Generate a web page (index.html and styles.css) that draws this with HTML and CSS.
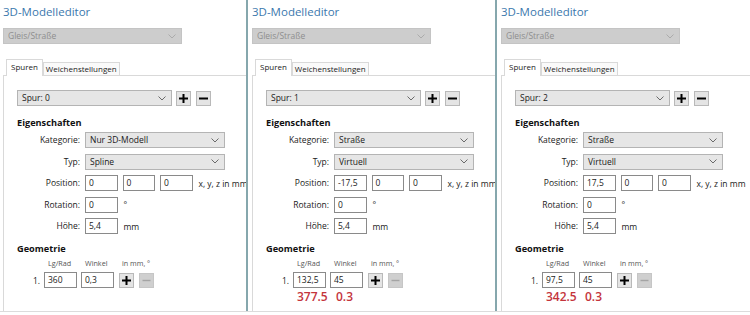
FILE: index.html
```html
<!DOCTYPE html>
<html>
<head>
	<title>3D-Modelleditor</title>
	<meta charset="utf-8">
	<link rel="stylesheet" href="styles.css">
</head>
<body>
	<div class="editors">

		<!-- Spur 0 -->
		<section class="editor">
			<h1 class="title">3D-Modelleditor</h1>
			<div class="combo disabled wide"><span>Gleis/Straße</span><svg class="chev" width="8" height="5"><polyline points="0.5,0.5 4,4 7.5,0.5"/></svg></div>
			<div class="tabs">
				<div class="tab active">Spuren</div>
				<div class="tab">Weichenstellungen</div>
			</div>
			<div class="pane">
				<div class="spur-row">
					<div class="combo spur"><span>Spur: 0</span><svg class="chev" width="8" height="5"><polyline points="0.5,0.5 4,4 7.5,0.5"/></svg></div>
					<div class="btn"><svg width="9" height="9"><path d="M4.5 0v9M0 4.5h9"/></svg></div>
					<div class="btn"><svg width="9" height="9"><path d="M0 4.5h9"/></svg></div>
				</div>
				<h2 class="section">Eigenschaften</h2>
				<div class="props">
					<label>Kategorie:</label>
					<div class="combo cat"><span>Nur 3D-Modell</span><svg class="chev" width="8" height="5"><polyline points="0.5,0.5 4,4 7.5,0.5"/></svg></div>
					<label>Typ:</label>
					<div class="combo cat"><span>Spline</span><svg class="chev" width="8" height="5"><polyline points="0.5,0.5 4,4 7.5,0.5"/></svg></div>
					<label>Position:</label>
					<div class="line"><div class="field">0</div><div class="field">0</div><div class="field">0</div><span class="unit">x, y, z in mm</span></div>
					<label>Rotation:</label>
					<div class="line"><div class="field">0</div><span class="unit deg">°</span></div>
					<label>Höhe:</label>
					<div class="line"><div class="field">5,4</div><span class="unit deg">mm</span></div>
				</div>
				<h2 class="section geo">Geometrie</h2>
				<div class="geo-head"><span>Lg/Rad</span><span>Winkel</span><span class="hint">in mm, °</span></div>
				<div class="geo-row">
					<span class="num">1.</span>
					<div class="field">360</div>
					<div class="field">0,3</div>
					<div class="btn"><svg width="9" height="9"><path d="M4.5 0v9M0 4.5h9"/></svg></div>
					<div class="btn off"><svg width="9" height="9"><path d="M0.5 4.5h8"/></svg></div>
				</div>
			</div>
		</section>

		<!-- Spur 1 -->
		<section class="editor">
			<h1 class="title">3D-Modelleditor</h1>
			<div class="combo disabled wide"><span>Gleis/Straße</span><svg class="chev" width="8" height="5"><polyline points="0.5,0.5 4,4 7.5,0.5"/></svg></div>
			<div class="tabs">
				<div class="tab active">Spuren</div>
				<div class="tab">Weichenstellungen</div>
			</div>
			<div class="pane">
				<div class="spur-row">
					<div class="combo spur"><span>Spur: 1</span><svg class="chev" width="8" height="5"><polyline points="0.5,0.5 4,4 7.5,0.5"/></svg></div>
					<div class="btn"><svg width="9" height="9"><path d="M4.5 0v9M0 4.5h9"/></svg></div>
					<div class="btn"><svg width="9" height="9"><path d="M0 4.5h9"/></svg></div>
				</div>
				<h2 class="section">Eigenschaften</h2>
				<div class="props">
					<label>Kategorie:</label>
					<div class="combo cat"><span>Straße</span><svg class="chev" width="8" height="5"><polyline points="0.5,0.5 4,4 7.5,0.5"/></svg></div>
					<label>Typ:</label>
					<div class="combo cat"><span>Virtuell</span><svg class="chev" width="8" height="5"><polyline points="0.5,0.5 4,4 7.5,0.5"/></svg></div>
					<label>Position:</label>
					<div class="line"><div class="field">-17,5</div><div class="field">0</div><div class="field">0</div><span class="unit">x, y, z in mm</span></div>
					<label>Rotation:</label>
					<div class="line"><div class="field">0</div><span class="unit deg">°</span></div>
					<label>Höhe:</label>
					<div class="line"><div class="field">5,4</div><span class="unit deg">mm</span></div>
				</div>
				<h2 class="section geo">Geometrie</h2>
				<div class="geo-head"><span>Lg/Rad</span><span>Winkel</span><span class="hint">in mm, °</span></div>
				<div class="geo-row">
					<span class="num">1.</span>
					<div class="field">132,5</div>
					<div class="field">45</div>
					<div class="btn"><svg width="9" height="9"><path d="M4.5 0v9M0 4.5h9"/></svg></div>
					<div class="btn off"><svg width="9" height="9"><path d="M0.5 4.5h8"/></svg></div>
				</div>
				<div class="result"><span>377.5</span><span>0.3</span></div>
			</div>
		</section>

		<!-- Spur 2 -->
		<section class="editor">
			<h1 class="title">3D-Modelleditor</h1>
			<div class="combo disabled wide"><span>Gleis/Straße</span><svg class="chev" width="8" height="5"><polyline points="0.5,0.5 4,4 7.5,0.5"/></svg></div>
			<div class="tabs">
				<div class="tab active">Spuren</div>
				<div class="tab">Weichenstellungen</div>
			</div>
			<div class="pane">
				<div class="spur-row">
					<div class="combo spur"><span>Spur: 2</span><svg class="chev" width="8" height="5"><polyline points="0.5,0.5 4,4 7.5,0.5"/></svg></div>
					<div class="btn"><svg width="9" height="9"><path d="M4.5 0v9M0 4.5h9"/></svg></div>
					<div class="btn"><svg width="9" height="9"><path d="M0 4.5h9"/></svg></div>
				</div>
				<h2 class="section">Eigenschaften</h2>
				<div class="props">
					<label>Kategorie:</label>
					<div class="combo cat"><span>Straße</span><svg class="chev" width="8" height="5"><polyline points="0.5,0.5 4,4 7.5,0.5"/></svg></div>
					<label>Typ:</label>
					<div class="combo cat"><span>Virtuell</span><svg class="chev" width="8" height="5"><polyline points="0.5,0.5 4,4 7.5,0.5"/></svg></div>
					<label>Position:</label>
					<div class="line"><div class="field">17,5</div><div class="field">0</div><div class="field">0</div><span class="unit">x, y, z in mm</span></div>
					<label>Rotation:</label>
					<div class="line"><div class="field">0</div><span class="unit deg">°</span></div>
					<label>Höhe:</label>
					<div class="line"><div class="field">5,4</div><span class="unit deg">mm</span></div>
				</div>
				<h2 class="section geo">Geometrie</h2>
				<div class="geo-head"><span>Lg/Rad</span><span>Winkel</span><span class="hint">in mm, °</span></div>
				<div class="geo-row">
					<span class="num">1.</span>
					<div class="field">97,5</div>
					<div class="field">45</div>
					<div class="btn"><svg width="9" height="9"><path d="M4.5 0v9M0 4.5h9"/></svg></div>
					<div class="btn off"><svg width="9" height="9"><path d="M0.5 4.5h8"/></svg></div>
				</div>
				<div class="result"><span>342.5</span><span>0.3</span></div>
			</div>
		</section>

	</div>
</body>
</html>
```

FILE: styles.css
```css
body {
	margin: 0;
	background-color: #fff;
	font-family: "Open Sans", "Noto Sans", sans-serif;
	font-size: 8.5px;
	color: #1a1a1a;
}
.editors {
	display: flex;
	border-bottom: 1px solid #dcdcdc;
}
.editor {
	width: 248px;
	height: 311px;
	flex: none;
	box-sizing: border-box;
	padding: 4px 0 0 3px;
	border-right: 2px solid #86a7ad;
	margin-right: 1px;
	overflow: hidden;
	display: flex;
	flex-direction: column;
}
.editor:last-child {
	border-right: none;
	margin-right: 0;
	flex: 1;
}
.title {
	margin: 0;
	font-size: 11.5px;
	line-height: 15px;
	font-weight: normal;
	color: #3b78ad;
}

/* combo boxes */
.combo {
	display: flex;
	align-items: center;
	justify-content: space-between;
	height: 16px;
	box-sizing: border-box;
	border: 1px solid #b4b4b4;
	background-color: #e6e6e6;
	padding: 0 5px 0 4px;
	line-height: 14px;
}
.chev polyline {
	fill: none;
	stroke: #6a6a6a;
	stroke-width: 1;
}
.combo.disabled {
	background-color: #cdcdcd;
	border-color: #c4c4c4;
	color: #8e8e8e;
}
.combo.disabled .chev polyline {
	stroke: #ababab;
}
.wide {
	width: 179px;
	margin-top: 9px;
}
.spur {
	width: 155px;
}
.cat {
	width: 140px;
}

/* tabs */
.tabs {
	display: flex;
	align-items: flex-end;
	margin: 15px 0 0 3px;
	height: 16px;
	font-size: 8px;
}
.tab {
	height: 13px;
	box-sizing: border-box;
	padding: 0 2px;
	border: 1px solid #d9d9d9;
	border-bottom: none;
	background-color: #fafafa;
	line-height: 12px;
}
.tab.active {
	height: 17px;
	margin-bottom: -1px;
	padding: 1px 4px 0;
	background-color: #fff;
	position: relative;
	z-index: 1;
}
.pane {
	flex: 1;
	width: 300px;
	border-top: 1px solid #d9d9d9;
	border-left: 1px solid #d9d9d9;
	padding: 14px 0 0 13px;
}

/* buttons */
.spur-row {
	display: flex;
	align-items: center;
}
.btn {
	width: 15px;
	height: 15px;
	box-sizing: border-box;
	border: 1px solid #b9b9b9;
	background-color: #e4e4e4;
	display: flex;
	align-items: center;
	justify-content: center;
	flex: none;
}
.btn path {
	stroke: #000;
	stroke-width: 2;
	fill: none;
}
.spur-row .btn {
	margin-left: 4px;
}
.spur-row .btn + .btn {
	margin-left: 5px;
}
.btn.off {
	background-color: #cfcfcf;
	border-color: #c6c6c6;
}
.btn.off path {
	stroke: #a4a4a4;
	stroke-width: 1.4;
}

/* properties */
.section {
	margin: 11px 0 3px;
	font-size: 9.2px;
	line-height: 12px;
	font-weight: bold;
	color: #111;
}
.props {
	display: grid;
	grid-template-columns: 63px auto;
	column-gap: 5px;
	row-gap: 5.5px;
	align-items: center;
}
.props label {
	text-align: right;
	line-height: 16px;
}
.line {
	display: flex;
	align-items: center;
	gap: 5px;
}
.line .field {
	width: 32.5px;
}
.field {
	width: 33px;
	height: 16px;
	box-sizing: border-box;
	border: 1px solid #8a8a8a;
	background-color: #fff;
	padding-left: 3px;
	line-height: 14px;
	flex: none;
}
.unit {
	margin-left: 1px;
	white-space: nowrap;
}

/* geometry */
.section.geo {
	margin: 9px 0 3px;
}
.geo-head {
	display: flex;
	font-size: 7.2px;
	line-height: 10px;
	color: #555;
	padding-left: 31px;
}
.geo-head span {
	width: 37px;
}
.geo-row {
	display: flex;
	align-items: center;
	margin-top: 4px;
}
.geo-row .num {
	width: 27px;
	text-align: right;
	padding-right: 4px;
	box-sizing: border-box;
}
.geo-row .field + .field {
	margin-left: 4px;
}
.geo-row .btn {
	margin-left: 5px;
}
.result {
	display: flex;
	margin-top: 2px;
	padding-left: 31px;
	font-size: 12px;
	line-height: 14px;
	font-weight: 600;
	color: #c4343c;
}
.result span {
	width: 39px;
}
```
